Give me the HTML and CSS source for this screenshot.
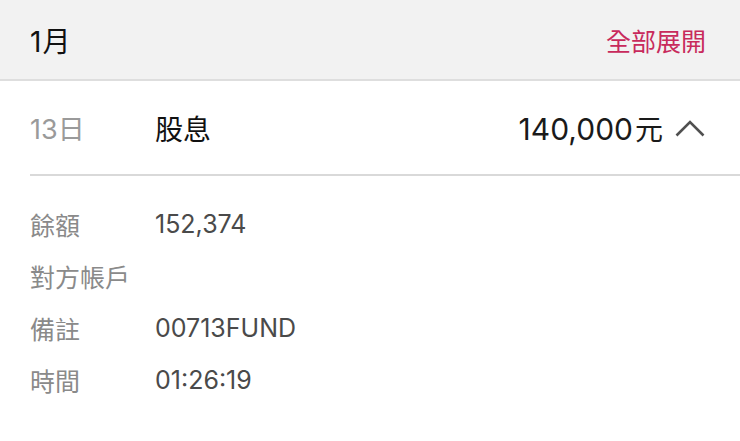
FILE: index.html
```html
<!DOCTYPE html>
<html lang="zh-Hant">
	<head>
		<meta charset="UTF-8" />
		<meta name="viewport" content="width=device-width, initial-scale=1.0" />
		<title>交易明細</title>
		<link rel="stylesheet" href="styles.css">
	</head>
	<body>
		<div class="month">
			<span class="month-name">1月</span>
			<span class="expand-all">全部展開</span>
		</div>
		<div class="entry">
			<span class="day">13日</span>
			<span class="title">股息</span>
			<span class="amount">140,000<span class="unit">元</span></span>
			<svg class="chevron" width="30" height="18" viewBox="0 0 30 18">
				<polyline points="1.5,16.5 15,3 28.5,16.5" fill="none" stroke="#505050" stroke-width="2.6" />
			</svg>
		</div>
		<div class="details">
			<div class="detail">
				<span class="label">餘額</span>
				<span class="value">152,374</span>
			</div>
			<div class="detail">
				<span class="label">對方帳戶</span>
				<span class="value"></span>
			</div>
			<div class="detail">
				<span class="label">備註</span>
				<span class="value">00713FUND</span>
			</div>
			<div class="detail">
				<span class="label">時間</span>
				<span class="value">01:26:19</span>
			</div>
		</div>
	</body>
</html>
```

FILE: styles.css
```css
body {
	margin: 0;
	background: #fff;
	font-family: Inter, "Noto Sans CJK TC", sans-serif;
	color: #1a1a1a;
}
.month {
	display: flex;
	align-items: center;
	justify-content: space-between;
	height: 81px;
	padding: 0 34px 0 30px;
	box-sizing: border-box;
	background: #f2f2f2;
	border-bottom: 2px solid #dedede;
}
.month-name {
	font-size: 28px;
	letter-spacing: 1px;
	color: #111;
}
.expand-all {
	font-size: 25px;
	color: #c82a5c;
}
.entry {
	display: flex;
	align-items: center;
	height: 93px;
	margin-left: 30px;
	padding-right: 35px;
	border-bottom: 2px solid #d9d9d9;
}
.day {
	width: 125px;
	font-size: 27px;
	color: #9a9a9a;
}
.title {
	flex: 1;
	font-size: 28px;
	color: #111;
}
.amount {
	font-size: 30px;
	color: #1a1a1a;
}
.unit {
	margin-left: 2px;
	font-size: 28px;
}
.chevron {
	margin-left: 12px;
}
.details {
	padding: 22px 0 0 30px;
}
.detail {
	display: flex;
	align-items: center;
	height: 52px;
	font-size: 25px;
}
.label {
	width: 125px;
	color: #8a8a8a;
}
.value {
	color: #4a4a4a;
}
```
